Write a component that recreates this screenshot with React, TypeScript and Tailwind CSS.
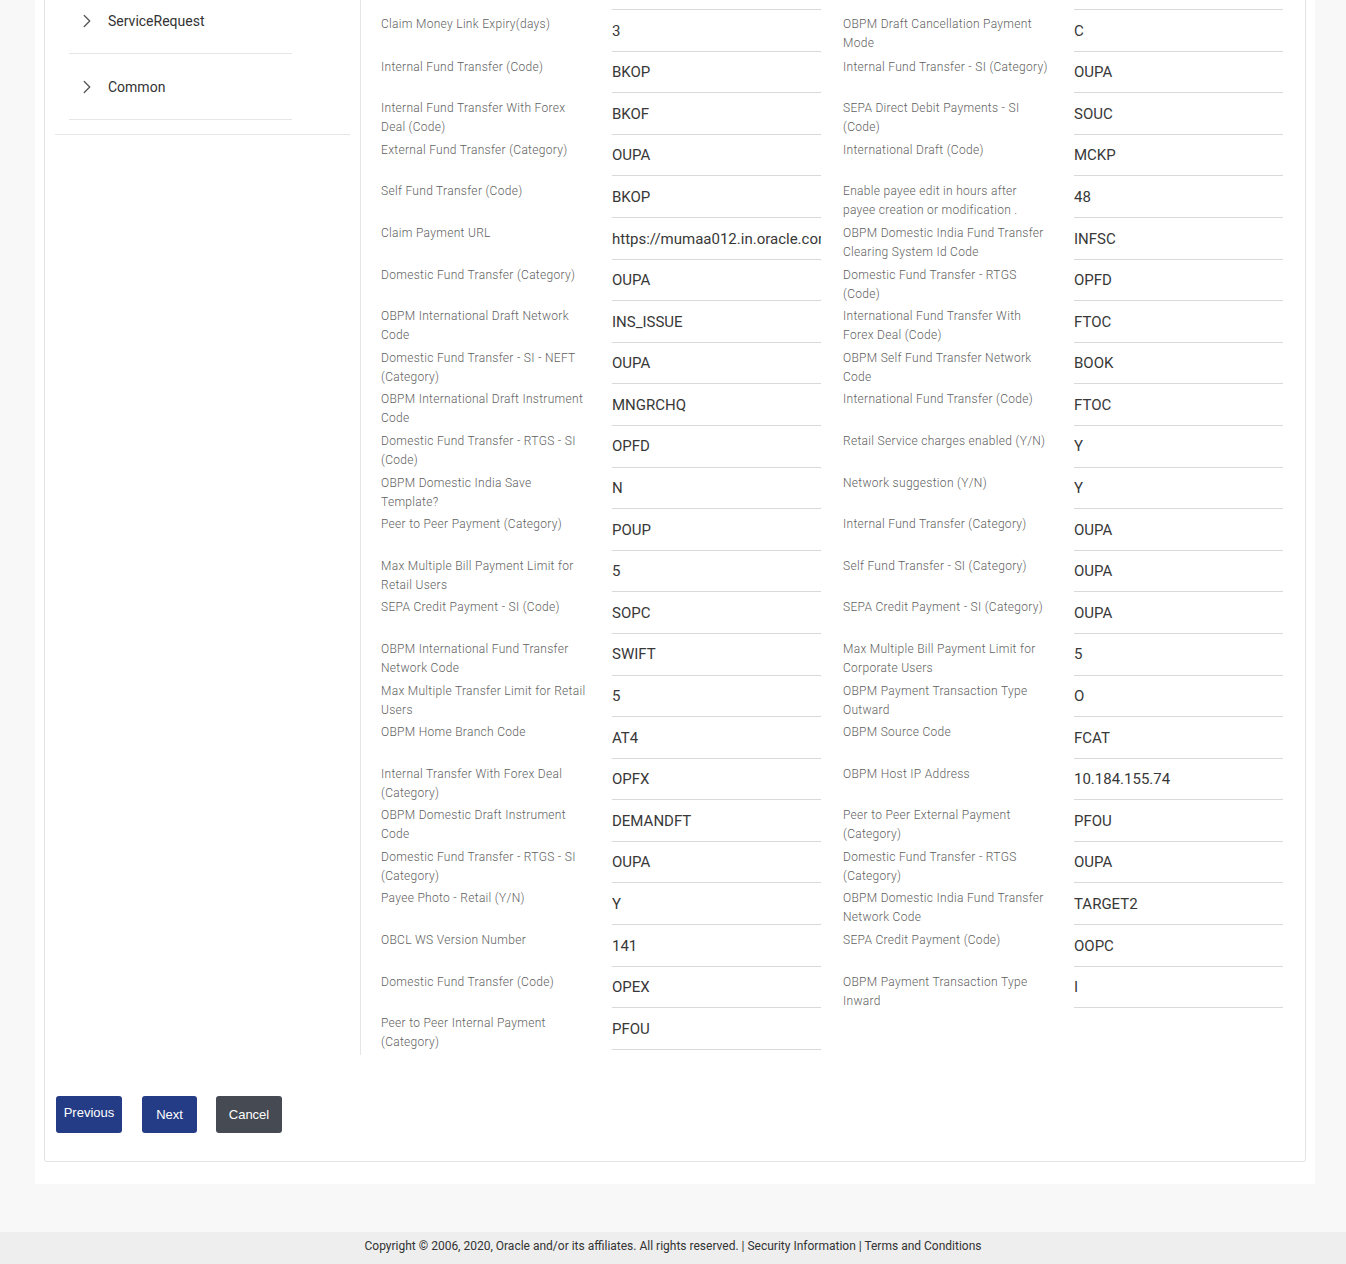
import { ChevronRight } from "lucide-react";

type Row = [string, string, string?, string?];

const rows: Row[] = [
  ["Claim Money Link Expiry(days)", "3", "OBPM Draft Cancellation Payment Mode", "C"],
  ["Internal Fund Transfer (Code)", "BKOP", "Internal Fund Transfer - SI (Category)", "OUPA"],
  ["Internal Fund Transfer With Forex Deal (Code)", "BKOF", "SEPA Direct Debit Payments - SI (Code)", "SOUC"],
  ["External Fund Transfer (Category)", "OUPA", "International Draft (Code)", "MCKP"],
  ["Self Fund Transfer (Code)", "BKOP", "Enable payee edit in hours after payee creation or modification .", "48"],
  ["Claim Payment URL", "https://mumaa012.in.oracle.com:18443/digx/claim", "OBPM Domestic India Fund Transfer Clearing System Id Code", "INFSC"],
  ["Domestic Fund Transfer (Category)", "OUPA", "Domestic Fund Transfer - RTGS (Code)", "OPFD"],
  ["OBPM International Draft Network Code", "INS_ISSUE", "International Fund Transfer With Forex Deal (Code)", "FTOC"],
  ["Domestic Fund Transfer - SI - NEFT (Category)", "OUPA", "OBPM Self Fund Transfer Network Code", "BOOK"],
  ["OBPM International Draft Instrument Code", "MNGRCHQ", "International Fund Transfer (Code)", "FTOC"],
  ["Domestic Fund Transfer - RTGS - SI (Code)", "OPFD", "Retail Service charges enabled (Y/N)", "Y"],
  ["OBPM Domestic India Save Template?", "N", "Network suggestion (Y/N)", "Y"],
  ["Peer to Peer Payment (Category)", "POUP", "Internal Fund Transfer (Category)", "OUPA"],
  ["Max Multiple Bill Payment Limit for Retail Users", "5", "Self Fund Transfer - SI (Category)", "OUPA"],
  ["SEPA Credit Payment - SI (Code)", "SOPC", "SEPA Credit Payment - SI (Category)", "OUPA"],
  ["OBPM International Fund Transfer Network Code", "SWIFT", "Max Multiple Bill Payment Limit for Corporate Users", "5"],
  ["Max Multiple Transfer Limit for Retail Users", "5", "OBPM Payment Transaction Type Outward", "O"],
  ["OBPM Home Branch Code", "AT4", "OBPM Source Code", "FCAT"],
  ["Internal Transfer With Forex Deal (Category)", "OPFX", "OBPM Host IP Address", "10.184.155.74"],
  ["OBPM Domestic Draft Instrument Code", "DEMANDFT", "Peer to Peer External Payment (Category)", "PFOU"],
  ["Domestic Fund Transfer - RTGS - SI (Category)", "OUPA", "Domestic Fund Transfer - RTGS (Category)", "OUPA"],
  ["Payee Photo - Retail (Y/N)", "Y", "OBPM Domestic India Fund Transfer Network Code", "TARGET2"],
  ["OBCL WS Version Number", "141", "SEPA Credit Payment (Code)", "OOPC"],
  ["Domestic Fund Transfer (Code)", "OPEX", "OBPM Payment Transaction Type Inward", "I"],
  ["Peer to Peer Internal Payment (Category)", "PFOU"],
];

function Field({ label, value, first }: { label: string; value: string; first: boolean }) {
  return (
    <div className="flex h-full w-[462px] shrink-0 pr-[22px]">
      <div className="w-[231px] shrink-0 pr-[23px] pt-[6px] text-[12px] font-light leading-[19px] tracking-[0.3px] text-[#5f5f5f]">
        {label}
      </div>
      <div
        className={`flex h-full w-[209px] shrink-0 items-center overflow-hidden whitespace-nowrap border-b border-[#d9d9d9] pt-px text-[15px] text-[#383838] ${first ? "border-t" : ""}`}
      >
        {value}
      </div>
    </div>
  );
}

function SideItem({ name }: { name: string }) {
  return (
    <div className="ml-[14px] flex h-[66px] w-[223px] items-center border-b border-[#e6e6e6] pl-[7px] pt-px">
      <ChevronRight size={22} strokeWidth={1.4} className="text-[#555]" />
      <span className="ml-[10px] text-[14px] text-[#333]">{name}</span>
    </div>
  );
}

export default function App() {
  return (
    <div className="min-h-[1264px] bg-[#f8f8f8] font-['Roboto',sans-serif]">
      <div className="ml-[35px] w-[1280px] bg-white px-[9px] pb-[22px]">
        <div className="-mt-[13px] rounded-b-[3px] border border-[#e3e3e3]">
          <div className="flex">
            <div className="w-[315px] shrink-0">
              <div className="ml-[10px] w-[295px] border-b border-[#e6e6e6] pb-[14px]">
                <SideItem name="ServiceRequest" />
                <SideItem name="Common" />
              </div>
            </div>
            <div className="flex-1 border-l border-[#e6e6e6] pb-[5px] pl-[20px] pt-[21px]">
              {rows.map(([l1, v1, l2, v2], i) => (
                <div key={i} className={`flex ${i === 0 ? "h-[42.6px]" : "h-[41.6px]"}`}>
                  <Field label={l1} value={v1} first={i === 0} />
                  {l2 !== undefined && v2 !== undefined && <Field label={l2} value={v2} first={i === 0} />}
                </div>
              ))}
            </div>
          </div>
          <div className="mt-[41px] flex items-center pb-[28px] pl-[11px] font-['Liberation_Sans',Arial,sans-serif] text-[13px] text-white">
            <button className="h-[37px] w-[66px] rounded-[3px] bg-[#243c85] pb-[3px]">Previous</button>
            <button className="ml-[20px] h-[37px] w-[55px] rounded-[3px] bg-[#243c85]">Next</button>
            <button className="ml-[19px] h-[37px] w-[66px] rounded-[3px] bg-[#454a53]">Cancel</button>
          </div>
        </div>
      </div>
      <div className="mt-[48px] bg-[#eeeeee] pb-[12px] pt-[7px] text-center font-['Liberation_Sans_Narrow','Roboto',sans-serif] text-[12px] leading-[14px] text-[#333]">
        Copyright © 2006, 2020, Oracle and/or its affiliates. All rights reserved. | Security Information | Terms and Conditions
      </div>
    </div>
  );
}
